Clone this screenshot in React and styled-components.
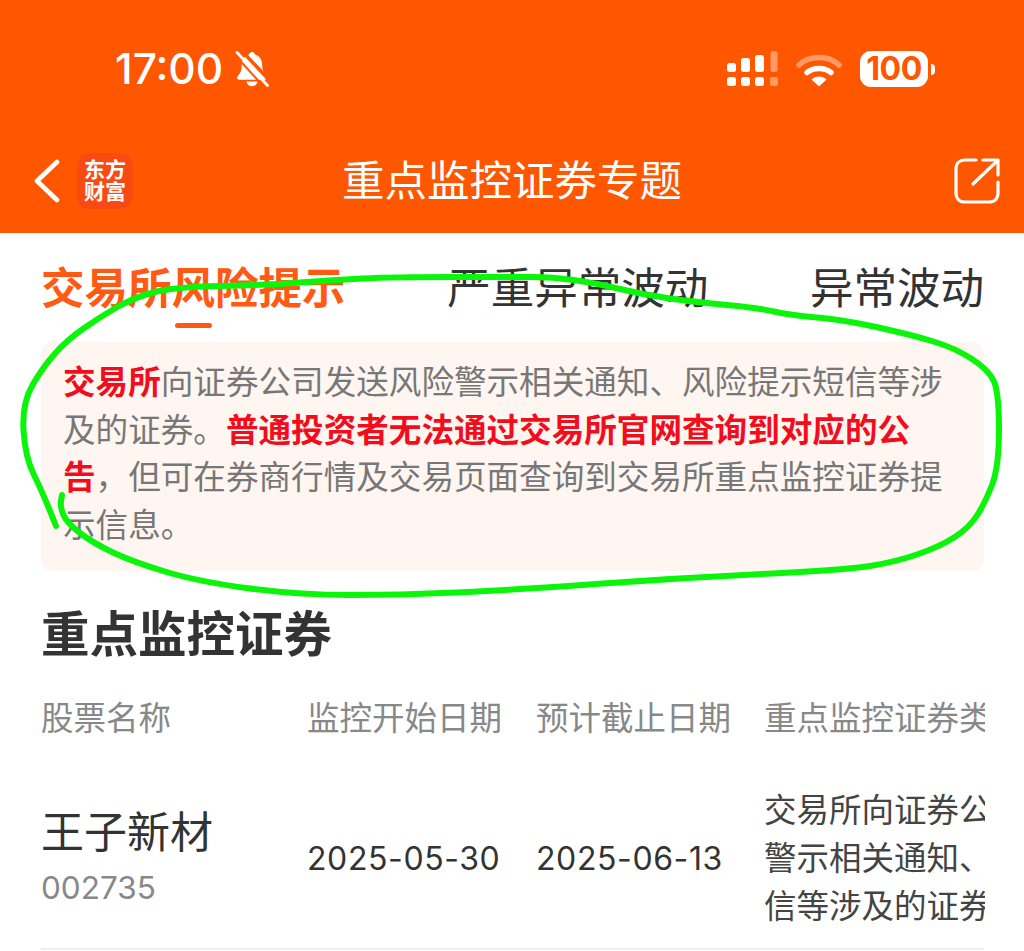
import React from "react"
import styled, { createGlobalStyle } from "styled-components"

const GlobalStyle = createGlobalStyle`
  html, body {
    margin: 0;
    padding: 0;
    background: #fff;
  }
  * {
    box-sizing: border-box;
  }
`

const cjk = `Inter, "Noto Sans CJK SC", sans-serif`

// the hand drawn green circle, points taken off the screenshot
const scribble = [
  [56, 526], [43, 493], [25, 457], [22, 403], [43, 367], [67, 340], [100, 317], [133, 298],
  [173, 287], [267, 285], [333, 280], [393, 277], [512, 277], [552, 277], [595, 283],
  [645, 295], [695, 302], [759, 308], [789, 315], [845, 320], [912, 335], [955, 348],
  [989, 370], [999, 393], [999, 467], [985, 503], [969, 528], [939, 547], [895, 562],
  [845, 570], [679, 578], [512, 590], [400, 595], [300, 595], [200, 582], [133, 562],
  [93, 543], [67, 523], [60, 507], [62, 495],
]

const smoothPath = (pts) => {
  let d = `M${pts[0][0]} ${pts[0][1]}`
  for (let i = 1; i < pts.length - 1; i++) {
    const mx = (pts[i][0] + pts[i + 1][0]) / 2
    const my = (pts[i][1] + pts[i + 1][1]) / 2
    d += ` Q${pts[i][0]} ${pts[i][1]} ${mx} ${my}`
  }
  const last = pts[pts.length - 1]
  return d + ` L${last[0]} ${last[1]}`
}

const tabs = ["交易所风险提示", "严重异常波动", "异常波动"]
const columns = ["股票名称", "监控开始日期", "预计截止日期", "重点监控证券类"]
const reasonLines = ["交易所向证券公", "警示相关通知、", "信等涉及的证券"]

const BellOff = () => (
  <BellSvg viewBox="0 0 34 36">
    <path
      d="M17 1c-1.600 0-2.700 1-3 2.400C9 4.800 6.800 9 6.800 14c0 4.700-1 7.700-4 11-1.500 1.700-.8 3.800 1.500 3.800h25.400c2.300 0 3-2.100 1.500-3.800-3-3.300-4-6.300-4-11 0-5-2.200-9.200-7.200-10.600C19.700 2 18.600 1 17 1z"
      fill="#fff"
    />
    <path d="M11.500 30.500h11c-.5 3-2.800 4.800-5.500 4.800s-5-1.800-5.500-4.800z" fill="#fff" />
    <path d="M5 -2L36 31" stroke="#ff5600" strokeWidth="3.500" />
    <path d="M2 1.500L32.500 34.500" stroke="#fff" strokeWidth="2.800" strokeLinecap="round" />
    <path d="M-1 3L29 36" stroke="#ff5600" strokeWidth="2" />
  </BellSvg>
)

const Signal = () => (
  <SignalSvg viewBox="0 0 52 36">
    <rect x="0" y="12" width="9" height="9" rx="2.500" fill="#fff" />
    <rect x="14" y="7" width="9" height="14" rx="2.500" fill="#fff" />
    <rect x="28" y="4" width="9" height="17" rx="2.500" fill="#fff" />
    <rect x="43.500" y="0" width="7" height="21" rx="2.500" fill="#fff" opacity="0.4" />
    <rect x="0" y="26" width="9" height="9" rx="2.500" fill="#fff" />
    <rect x="14" y="26" width="9" height="9" rx="2.500" fill="#fff" />
    <rect x="28" y="26" width="9" height="9" rx="2.500" fill="#fff" />
    <rect x="43" y="26" width="8" height="9" rx="2" fill="#fff" opacity="0.4" />
  </SignalSvg>
)

const Wifi = () => (
  <WifiSvg viewBox="0 0 46 34">
    <path d="M3 13C13 3 33 3 43 13" fill="none" stroke="#fff" strokeOpacity="0.4" strokeWidth="5.500" strokeLinecap="round" />
    <path d="M11 20.500C17 15 29 15 35 20.500" fill="none" stroke="#fff" strokeWidth="5.500" strokeLinecap="round" />
    <path d="M16.500 27.500C20 24.500 26 24.500 29.500 27.500L23 33.500z" fill="#fff" stroke="#fff" strokeWidth="1.500" strokeLinejoin="round" />
  </WifiSvg>
)

const ShareIcon = () => (
  <ShareSvg viewBox="0 0 50 50" fill="none" stroke="#fff" strokeWidth="3.200" strokeLinecap="round" strokeLinejoin="round">
    <path d="M24 4H13C7.500 4 4 7.500 4 13V37C4 42.500 7.500 46 13 46H37C42.500 46 46 42.500 46 37V26" />
    <path d="M21 28L45 5" />
    <path d="M31 4H46V19" />
  </ShareSvg>
)

const App = () => {
  return (
    <Page>
      <GlobalStyle />
      <Header>
        <StatusBar>
          <TimeWrap>
            <Time>17:00</Time>
            <BellOff />
          </TimeWrap>
          <StatusIcons>
            <Signal />
            <Wifi />
            <Battery>
              <BatteryBody>100</BatteryBody>
              <BatteryNub />
            </Battery>
          </StatusIcons>
        </StatusBar>
        <NavBar>
          <NavLeft>
            <BackSvg viewBox="0 0 28 44" fill="none">
              <path d="M24 3L4 22L24 41" stroke="#fff" strokeWidth="4.600" strokeLinecap="round" strokeLinejoin="round" />
            </BackSvg>
            <Logo>
              <span>东方</span>
              <span>财富</span>
            </Logo>
          </NavLeft>
          <NavTitle>重点监控证券专题</NavTitle>
          <NavRight>
            <ShareIcon />
          </NavRight>
        </NavBar>
      </Header>

      <Content>
        <TabRow>
          {tabs.map((tab, index) => (
            <Tab key={tab} $active={index === 0}>
              {tab}
            </Tab>
          ))}
        </TabRow>

        <Notice>
          <Strong>交易所</Strong>向证券公司发送风险警示相关通知、风险提示短信等涉及的证券。
          <Strong>普通投资者无法通过交易所官网查询到对应的公告</Strong>，但可在券商行情及交易页面查询到交易所重点监控证券提示信息。
        </Notice>

        <SectionTitle>重点监控证券</SectionTitle>

        <TableHead>
          {columns.map((col) => (
            <HeadCell key={col}>{col}</HeadCell>
          ))}
        </TableHead>

        <TableRow>
          <NameCell>
            <StockName>王子新材</StockName>
            <StockCode>002735</StockCode>
          </NameCell>
          <DateCell>2025-05-30</DateCell>
          <DateCell>2025-06-13</DateCell>
          <ReasonCell>
            {reasonLines.map((line) => (
              <ReasonLine key={line}>{line}</ReasonLine>
            ))}
          </ReasonCell>
        </TableRow>
      </Content>

      <Scribble viewBox="0 0 1024 951">
        <path d={smoothPath(scribble)} fill="none" stroke="#0bf50b" strokeWidth="6" strokeLinecap="round" strokeLinejoin="round" />
      </Scribble>
    </Page>
  )
}

export default App

const Page = styled.div`
  position: relative;
  width: 1024px;
  height: 951px;
  overflow: hidden;
  background: #fff;
  font-family: ${cjk};
`

const Header = styled.header`
  height: 233px;
  background: #ff5600;
  color: #fff;
`

const StatusBar = styled.div`
  height: 129px;
  padding: 9px 89px 0 115px;
  display: flex;
  align-items: center;
  justify-content: space-between;
`

const TimeWrap = styled.div`
  display: flex;
  align-items: center;
  gap: 12px;
`

const Time = styled.span`
  font-size: 42.500px;
  font-weight: 500;
  line-height: 1;
`

const BellSvg = styled.svg`
  width: 34px;
  height: 36px;
  overflow: hidden;
`

const StatusIcons = styled.div`
  display: flex;
  align-items: center;
`

const SignalSvg = styled.svg`
  width: 52px;
  height: 36px;
  margin-right: 17px;
`

const WifiSvg = styled.svg`
  width: 46px;
  height: 34px;
  margin-right: 18px;
`

const Battery = styled.div`
  display: flex;
  align-items: center;
  gap: 3px;
`

const BatteryBody = styled.div`
  width: 68px;
  height: 36px;
  border-radius: 11px;
  background: #fff;
  color: #ff5600;
  font-size: 32px;
  font-weight: 700;
  line-height: 36px;
  letter-spacing: -0.5px;
  text-align: center;
`

const BatteryNub = styled.div`
  width: 4px;
  height: 11px;
  border-radius: 0 4px 4px 0;
  background: #fff;
`

const NavBar = styled.nav`
  height: 104px;
  padding: 0 22px;
  display: grid;
  grid-template-columns: 1fr auto 1fr;
  align-items: center;
`

const NavLeft = styled.div`
  display: flex;
  align-items: center;
  gap: 16px;
  padding-left: 11px;
`

const NavRight = styled.div`
  display: flex;
  justify-content: flex-end;
`

const BackSvg = styled.svg`
  width: 28px;
  height: 44px;
`

const Logo = styled.div`
  width: 56px;
  height: 56px;
  border-radius: 13px;
  background: #f94a14;
  display: flex;
  flex-direction: column;
  align-items: center;
  justify-content: center;
  font-size: 21px;
  font-weight: 700;
  line-height: 22px;
`

const NavTitle = styled.div`
  font-size: 42.500px;
  line-height: 52px;
  font-weight: 400;
`

const ShareSvg = styled.svg`
  width: 50px;
  height: 50px;
`

const Content = styled.main`
  padding: 0 40px 0 41px;
`

const TabRow = styled.div`
  display: flex;
  justify-content: space-between;
  padding-top: 29px;
  height: 109px;
`

const Tab = styled.div`
  position: relative;
  font-size: 43.500px;
  line-height: 52px;
  font-weight: ${(p) => (p.$active ? 700 : 400)};
  color: ${(p) => (p.$active ? "#ff5a14" : "#333")};

  &::after {
    content: "";
    display: ${(p) => (p.$active ? "block" : "none")};
    position: absolute;
    left: 50%;
    top: 61px;
    width: 37px;
    height: 5px;
    margin-left: -18px;
    border-radius: 3px;
    background: #ff5a14;
  }
`

const Notice = styled.div`
  height: 229px;
  padding: 17px 22px 0;
  border-radius: 12px;
  background: #fff5f1;
  color: #777;
  font-size: 32.600px;
  line-height: 47.500px;
`

const Strong = styled.span`
  color: #f20d1c;
  font-weight: 700;
`

const SectionTitle = styled.h2`
  margin: 34px 0 0;
  font-size: 48.500px;
  font-weight: 700;
  line-height: 60px;
  color: #333;
`

const TableHead = styled.div`
  display: grid;
  grid-template-columns: 266px 229px 228px 221px;
  margin-top: 30px;
`

const HeadCell = styled.div`
  font-size: 32.500px;
  line-height: 48px;
  color: #888;
  white-space: nowrap;
  overflow: hidden;
`

const TableRow = styled.div`
  display: grid;
  grid-template-columns: 266px 229px 228px 221px;
  align-items: center;
  height: 181px;
  margin-top: 26px;
  border-bottom: 2px solid #eee;
`

const NameCell = styled.div`
  padding-bottom: 5px;
`

const StockName = styled.div`
  font-size: 43px;
  line-height: 52px;
  color: #333;
`

const StockCode = styled.div`
  margin-top: 12px;
  font-size: 31.500px;
  line-height: 36px;
  color: #888;
`

const DateCell = styled.div`
  font-size: 32px;
  line-height: 48px;
  letter-spacing: 0.6px;
  color: #333;
`

const ReasonCell = styled.div`
  overflow: hidden;
`

const ReasonLine = styled.div`
  font-size: 32.500px;
  line-height: 48px;
  color: #444;
  white-space: nowrap;
`

const Scribble = styled.svg`
  position: absolute;
  left: 0;
  top: 0;
  width: 1024px;
  height: 951px;
  pointer-events: none;
`
